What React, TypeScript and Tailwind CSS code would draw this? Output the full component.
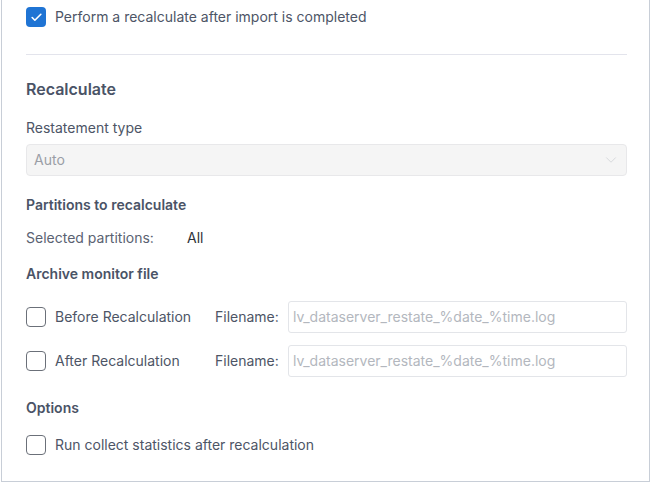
import { Check, ChevronDown } from 'lucide-react';

const Box = ({ checked = false }: { checked?: boolean }) =>
  checked ? (
    <span className="w-5 h-5 rounded-[4px] bg-[#1f74d4] flex items-center justify-center shrink-0">
      <Check size={13} strokeWidth={3} className="text-white" />
    </span>
  ) : (
    <span className="w-5 h-5 rounded-[4px] border-[1.5px] border-[#6b7079] bg-white shrink-0" />
  );

const FileRow = ({ label, className }: { label: string; className: string }) => (
  <div className={`flex items-center h-[32px] ${className}`}>
    <div className="w-[189px] flex items-center gap-[9px]">
      <Box />
      <span className="text-[14px] text-[#4d5566]">{label}</span>
    </div>
    <span className="text-[14px] text-[#4d5566] w-[73px]">Filename:</span>
    <div className="flex-1 h-[32px] border border-[#e3e5e9] rounded-[3px] flex items-center px-[4px] text-[14px] text-[#b3b7be]">
      lv_dataserver_restate_%date_%time.log
    </div>
  </div>
);

export default function App() {
  return (
    <div className="w-[649px] ml-px border-x border-b border-[#c8ced7] bg-white pl-6 pr-[22px] pb-[26px] font-['Inter',sans-serif] leading-5">
      <div className="flex items-center gap-[9px] h-[34px]">
        <Box checked />
        <span className="text-[14px] text-[#4d5566]">Perform a recalculate after import is completed</span>
      </div>

      <div className="mt-[20px] h-px bg-[#e3e4ec]" />

      <h2 className="mt-[24px] text-[16px] font-semibold text-[#4a5366]">Recalculate</h2>

      <div className="mt-[19px] text-[14px] text-[#4d5566]">Restatement type</div>
      <div className="mt-[6px] h-[32px] bg-[#f5f5f5] border border-[#e8e8ea] rounded-[4px] flex items-center justify-between pl-[7px] pr-[6px]">
        <span className="text-[14px] text-[#9a9ea6]">Auto</span>
        <ChevronDown size={18} strokeWidth={1.25} className="text-[#d4d6da]" />
      </div>

      <div className="mt-[19px] text-[14px] font-semibold text-[#4a5366]">Partitions to recalculate</div>
      <div className="mt-[13px] flex text-[14px]">
        <span className="w-[161px] text-[#5a6272]">Selected partitions:</span>
        <span className="text-[#2f3338]">All</span>
      </div>

      <div className="mt-[16px] text-[14px] font-semibold text-[#4a5366]">Archive monitor file</div>
      <FileRow label="Before Recalculation" className="mt-[17px]" />
      <FileRow label="After Recalculation" className="mt-[12px]" />

      <div className="mt-[21px] text-[14px] font-semibold text-[#4a5366]">Options</div>
      <div className="mt-[17px] flex items-center gap-[9px] h-5">
        <Box />
        <span className="text-[14px] text-[#4d5566]">Run collect statistics after recalculation</span>
      </div>
    </div>
  );
}
